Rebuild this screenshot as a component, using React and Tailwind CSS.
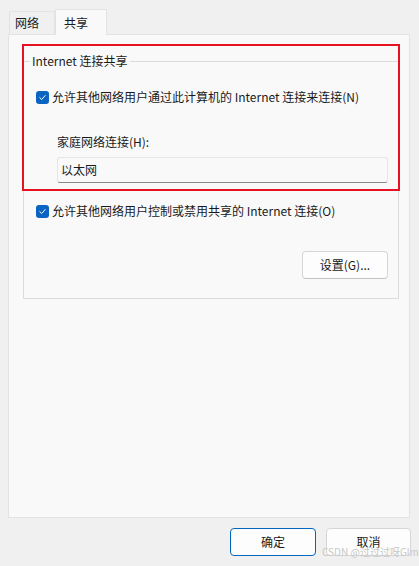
import React from "react"

const font = { fontFamily: '"Segoe UI", "Noto Sans CJK SC", "Noto Sans", sans-serif' }

const Check = () => (
  <span className="w-[13px] h-[13px] rounded-[3px] bg-[#0a64c2] flex items-center justify-center shrink-0">
    <svg width="9" height="9" viewBox="0 0 10 10" fill="none">
      <path d="M2 5.2 L4.1 7.2 L8 2.8" stroke="#ffffff" strokeWidth="1.1" strokeLinecap="round" strokeLinejoin="round" />
    </svg>
  </span>
)

export default function App() {
  return (
    <div
      className="relative w-[419px] h-[566px] bg-[#f0f0f0] text-[12px] text-[#1a1a1a] overflow-hidden font-['Noto_Sans_CJK_SC',sans-serif]"
      style={font}
    >
      {/* tabs */}
      <div className="flex items-end pl-[9px] pt-[8px] h-[34px]">
        <div className="w-[46px] h-[23px] border border-b-0 border-[#e3e3e3] bg-[#f0f0f0] flex items-center pl-[5px]">
          网络
        </div>
        <div className="relative z-10 w-[52px] h-[26px] -mb-px border border-b-0 border-[#e3e3e3] bg-[#f9f9f9] flex items-center pl-[8px]">
          共享
        </div>
      </div>

      {/* panel */}
      <div className="ml-[8px] w-[402px] h-[484px] border border-[#e3e3e3] bg-[#f9f9f9] pt-[18px] pl-[14px]">
        <fieldset className="w-[374px] h-[246px] border border-[#dcdcdc] pl-[12px] pr-[10px]">
          <legend className="ml-[-6px] px-[2px] leading-[16px] text-[12px]">Internet 连接共享</legend>
          <div className="flex items-center gap-[3px] mt-[20px] h-[16px]">
            <Check />
            <span>允许其他网络用户通过此计算机的 Internet 连接来连接(N)</span>
          </div>
          <div className="mt-[29px] ml-[21px] leading-[16px]">家庭网络连接(H):</div>
          <div className="mt-[7px] ml-[21px] w-[331px] h-[26px] rounded-[3px] border border-[#e6e6e6] border-b-[#8a8a8a] bg-[#f9f9f9] flex items-center pl-[3px]">
            以太网
          </div>
          <div className="flex items-center gap-[3px] mt-[20px] h-[16px]">
            <Check />
            <span>允许其他网络用户控制或禁用共享的 Internet 连接(O)</span>
          </div>
          <div className="flex justify-end mt-[32px]">
            <div className="w-[86px] h-[28px] rounded-[4px] border border-[#d6d6d6] border-b-[#c2c2c2] bg-[#fdfdfd] flex items-center justify-center">
              设置(G)...
            </div>
          </div>
        </fieldset>
      </div>

      {/* bottom buttons */}
      <div className="flex justify-end gap-[10px] pr-[8px] mt-[10px]">
        <div className="w-[86px] h-[28px] rounded-[4px] border border-[#0067c0] bg-[#fdfdfd] flex items-center justify-center">
          确定
        </div>
        <div className="w-[85px] h-[28px] rounded-[4px] border border-[#d6d6d6] bg-[#fdfdfd] flex items-center justify-center">
          取消
        </div>
      </div>

      {/* red annotation box */}
      <div className="absolute left-[22px] top-[44px] w-[378px] h-[147px] border-2 border-[#e81123] pointer-events-none" />

      {/* watermark */}
      <div className="absolute left-[322px] top-[546px] text-[10px] text-[#c8c8c8] leading-[12px] whitespace-nowrap">
        CSDN @过过过呀Glm
      </div>
    </div>
  )
}
